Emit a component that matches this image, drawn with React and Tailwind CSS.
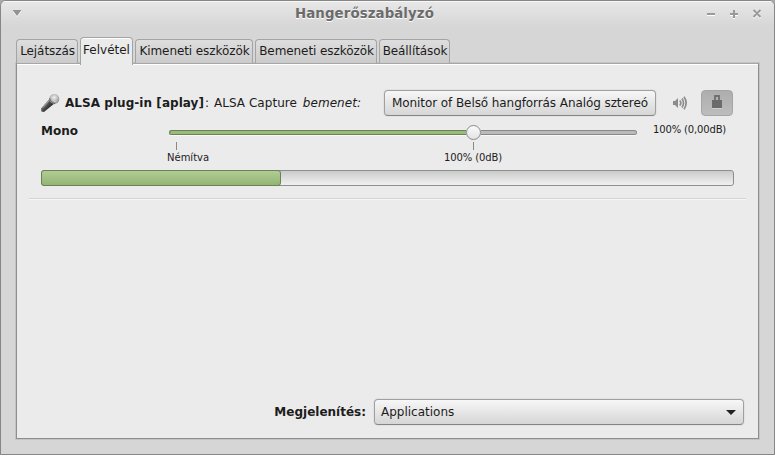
import React from "react";

const tabs = [
  { label: "Lejátszás", size: "w-[62px]" },
  { label: "Felvétel", size: "w-[53px]", active: true },
  { label: "Kimeneti eszközök", size: "w-[118px]" },
  { label: "Bemeneti eszközök", size: "w-[122px]" },
  { label: "Beállítások", size: "w-[71px]" },
];

function TitleBar() {
  return (
    <header className="flex h-[36px] shrink-0 items-start bg-linear-to-b from-[#e8e8e8] to-[#d6d6d6] to-70% text-[#9a9a9a] shadow-[inset_0_1px_0_#f7f7f7]">
      <svg className="mt-[9px] ml-[11px] h-[8px] w-[10px]" viewBox="0 0 10 8">
        <path d="M.5 1h9L5 7z" fill="#fff" />
        <path d="M.5 0h9L5 6z" fill="#929292" />
      </svg>
      <h1 className="mt-[4px] ml-[44px] flex-1 pl-[229px] text-[13.33px] leading-[18px] font-bold tracking-[0.1px] whitespace-nowrap text-[#6b6b6b] [text-shadow:0_1px_0_#fff]">
        Hangerőszabályzó
      </h1>
      <svg className="mt-[7px] mr-[12px] h-[13px] w-[56px]" viewBox="0 0 56 13">
        <g fill="none" stroke="#fff" strokeWidth="2">
          <path d="M1 7h8M24 7h8M28 3v8M47.5 3l7 7M54.5 3l-7 7" />
        </g>
        <g fill="none" stroke="#999" strokeWidth="2">
          <path d="M1 6h8M24 6h8M28 2v8M47.5 2l7 7M54.5 2l-7 7" />
        </g>
      </svg>
    </header>
  );
}

function Tabs() {
  return (
    <nav className="relative z-10 -mb-[2px] ml-[15px] flex h-[28px] items-end gap-[2px]">
      {tabs.map((t) =>
        t.active ? (
          <button key={t.label} className={`${t.size} h-[28px] rounded-t-[4px] border border-b-0 border-[#a4a4a4] bg-[#ebebeb] pb-[4px] text-center whitespace-nowrap shadow-[inset_0_1px_0_#fff]`}>
            {t.label}
          </button>
        ) : (
          <button key={t.label} className={`${t.size} mb-[2px] h-[24px] rounded-t-[4px] border border-b-0 border-[#a4a4a4] bg-linear-to-b from-[#dedede] to-[#cbcbcb] pb-px pl-px text-center tracking-[-0.08px] whitespace-nowrap`}>
            {t.label}
          </button>
        )
      )}
    </nav>
  );
}

function MicIcon() {
  return (
    <svg className="h-[20px] w-[20px]" viewBox="0 0 20 20">
      <defs>
        <linearGradient id="mic-body" x1=".25" y1=".3" x2=".75" y2=".75">
          <stop offset="0" stopColor="#8a8a8a" />
          <stop offset=".4" stopColor="#505050" />
          <stop offset="1" stopColor="#1c1c1c" />
        </linearGradient>
        <radialGradient id="mic-head" cx=".5" cy=".35" r=".65">
          <stop offset="0" stopColor="#f2f2f2" />
          <stop offset=".5" stopColor="#bcbcbc" />
          <stop offset="1" stopColor="#858585" />
        </radialGradient>
      </defs>
      <path d="M9.4 6 14 10.8 4 19 1.4 18.6 1 15.6z" fill="url(#mic-body)" />
      <path d="M9.5 7.2 3.2 14.6" stroke="#a8a8a8" strokeWidth=".9" />
      <circle cx="14.3" cy="6" r="5" fill="url(#mic-head)" />
      <path d="M9.6 5.2c.5 2.8 2.2 4.9 5.4 5.6" fill="none" stroke="#6c6c6c" strokeWidth="1" />
      <path d="M11.2 3.6c.6 2.7 2.4 4.7 5.4 5.3" fill="none" stroke="#dedede" strokeWidth=".8" />
    </svg>
  );
}

function SpeakerIcon() {
  return (
    <svg className="h-[16px] w-[16px]" viewBox="0 0 16 16" fill="none">
      <path d="M1 6h2l3-3v10l-3-3H1z" fill="#8c8c8c" />
      <path d="M7.8 5.4q2 2.6 0 5.2M10 3.6q3 4.4 0 8.8M12 1.8q4.3 6.2 0 12.4" stroke="#8c8c8c" strokeWidth="1.7" />
    </svg>
  );
}

function VolumeScale() {
  return (
    <div className="ml-[92px] w-[468px] text-[10px] leading-[12px]">
      <div className="flex h-[16px] items-center">
        <div className="h-[5px] w-[297px] rounded-l-full border border-r-0 border-[#6a8256] bg-[#9bbb7d] shadow-[0_1px_0_#f8f8f8]" />
        <div className="z-10 size-[15px] rounded-full border border-[#888] bg-linear-to-b from-[#fafafa] to-[#e3e3e3]" />
        <div className="h-[5px] flex-1 rounded-r-full border border-l-0 border-[#888] bg-[#bababa] shadow-[0_1px_0_#f8f8f8]" />
      </div>
      <div className="mt-[2px] flex h-[8px] pl-[7px]">
        <i className="w-px bg-[#888]" />
        <i className="ml-[296px] w-px bg-[#888]" />
      </div>
      <div className="mt-[2px] flex whitespace-nowrap">
        <span className="-ml-[2px] w-[277px]">Némítva</span>
        <span className="tracking-[-0.1px]">100% (0dB)</span>
      </div>
    </div>
  );
}

export default function App() {
  return (
    <div className="h-[455px] w-[775px] bg-[#aaa] text-[12px] leading-[16px] text-[#1c1c1c] [font-family:'DejaVu_Sans',sans-serif]">
      <div className="flex h-[455px] flex-col overflow-hidden rounded-t-[6px] border border-[#868686] bg-[#d6d6d6]">
        <TitleBar />
        <Tabs />
        <main className="mx-[15px] mb-[15px] flex flex-1 flex-col border border-t-[#a6a6a6] border-r-[#8e8e8e] border-b-[#8e8e8e] border-l-[#8e8e8e] bg-[#ebebeb] shadow-[inset_0_1px_0_#fff,0_0_0_1px_#c3c3c3]">
          <section className="mx-[12px] h-[135px] border-b border-[#d4d4d4] pt-[26px] pl-[12px] shadow-[0_1px_0_#f7f7f7]">
            <div className="flex h-[26px] items-center whitespace-nowrap">
              <div className="-ml-px w-[25px]"><MicIcon /></div>
              <p className="w-[319px]">
                <b className="tracking-[0.05px]">ALSA plug-in [aplay]</b><span className="ml-px">:</span> <span className="ml-[1px] tracking-[0.05px]">ALSA Capture</span> <em className="ml-[2px] tracking-[0.05px]">bemenet:</em>
              </p>
              <button className="h-[26px] w-[272px] rounded-[4px] border border-[#a0a0a0] border-b-[#858585] bg-linear-to-b from-[#f7f7f7] to-[#d6d6d6] text-center tracking-[-0.08px] shadow-[0_0_0_1px_#e2e2e2]">
                Monitor of Belső hangforrás Analóg sztereó
              </button>
              <div className="ml-[16px]"><SpeakerIcon /></div>
              <button className="ml-[13px] flex h-[26px] w-[32px] items-center justify-center rounded-[4px] border border-[#a5a5a5] bg-linear-to-b from-[#adadad] to-[#bdbdbd]">
                <svg className="h-[14px] w-[10px] overflow-visible" viewBox="0 0 10 14">
                  <path d="M0 12.5h10" stroke="#cfcfcf" />
                  <path d="M3 5V0h4v5" fill="none" stroke="#707070" strokeWidth="1.9" />
                  <path d="M0 4h10v8H0z" fill="#6b6b6b" />
                </svg>
              </button>
            </div>
            <div className="flex h-[48px]">
              <b className="mt-[7px] w-[36px]">Mono</b>
              <div className="mt-[8px]"><VolumeScale /></div>
              <span className="mt-[8px] ml-[16px] text-[10px] leading-[12px] tracking-[-0.15px] whitespace-nowrap">100% (0,00dB)</span>
            </div>
            <div className="mt-[6px] h-[16px] w-[693px] rounded-[3px] border border-[#8c908a] bg-linear-to-b from-[#cbcbcb] to-[#f0f0f0]">
              <div className="-mt-px -ml-px h-[16px] w-[240px] rounded-[3px] border border-[#6a8256] bg-linear-to-b from-[#b0cc94] to-[#94b573]" />
            </div>
          </section>
          <footer className="mt-auto mr-[14px] mb-[13px] flex items-center justify-end gap-[8px]">
            <b>Megjelenítés:</b>
            <button className="flex h-[26px] w-[370px] items-center justify-between rounded-[4px] border border-[#a0a0a0] border-b-[#858585] bg-linear-to-b from-[#f7f7f7] to-[#d6d6d6] pr-[7px] pl-[6px] shadow-[0_0_0_1px_#e2e2e2]">
              Applications
              <svg className="h-[5px] w-[10px]" viewBox="0 0 10 5"><path d="M0 0h10L5 5z" fill="#222" /></svg>
            </button>
          </footer>
        </main>
      </div>
    </div>
  );
}
